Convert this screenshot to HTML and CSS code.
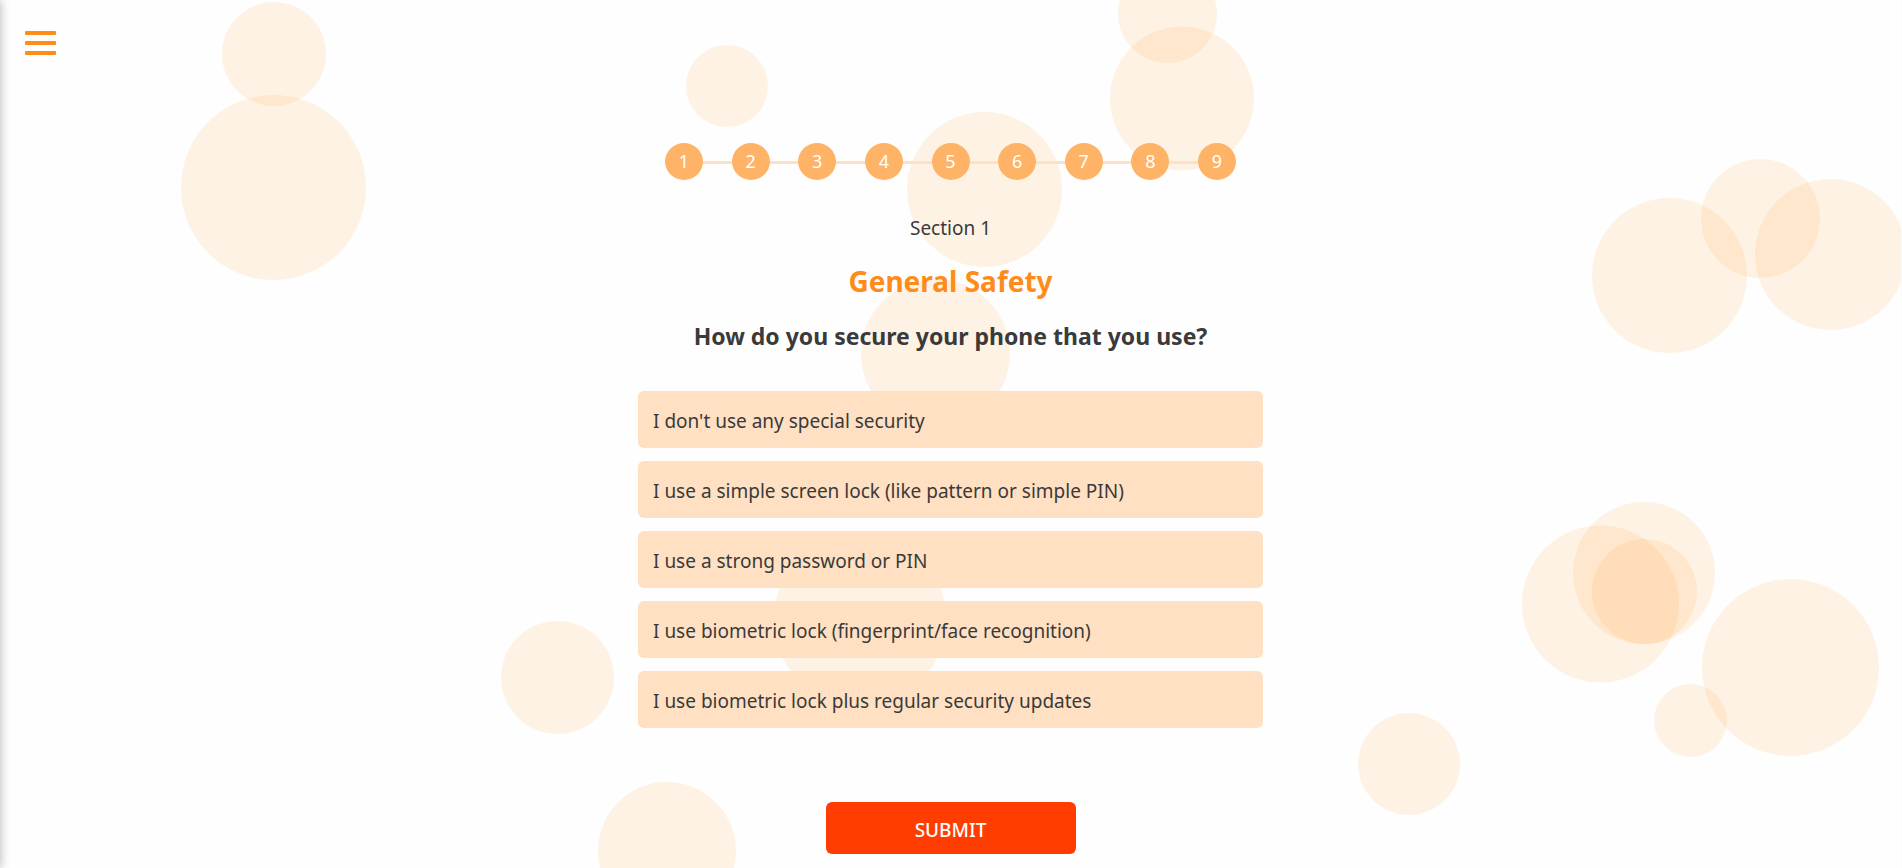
FILE: index.html
```html
<!DOCTYPE html>
<html lang="en">
<head>
<meta charset="utf-8">
<meta name="viewport" content="width=device-width, initial-scale=1">
<title>General Safety</title>
<link rel="stylesheet" href="styles.css">
</head>
<body>
<svg class="bubbles" aria-hidden="true">
  <circle cx="274" cy="54" r="52"/>
  <circle cx="273.5" cy="187.5" r="92.5"/>
  <circle cx="727" cy="86" r="41"/>
  <circle cx="1167.5" cy="13.5" r="49.5"/>
  <circle cx="1182" cy="98.5" r="72"/>
  <circle cx="984.5" cy="189.5" r="77.5"/>
  <circle cx="935.5" cy="353.5" r="74.5"/>
  <circle cx="860" cy="619.5" r="86.5"/>
  <circle cx="557.5" cy="677.5" r="56.5"/>
  <circle cx="667" cy="851" r="69"/>
  <circle cx="1669.5" cy="275.5" r="77.5"/>
  <circle cx="1760.5" cy="218.5" r="59.5"/>
  <circle cx="1830.5" cy="254.5" r="75.5"/>
  <circle cx="1600.5" cy="604" r="78.5"/>
  <circle cx="1644" cy="573" r="71"/>
  <circle cx="1644.5" cy="591.5" r="52.5"/>
  <circle cx="1790.5" cy="667.5" r="88.5"/>
  <circle cx="1690.5" cy="720.5" r="36.5"/>
  <circle cx="1409" cy="764" r="51"/>
</svg>
<aside class="sidebar"></aside>
<button class="menu-toggle" type="button" aria-label="Open menu">
  <span class="menu-bar"></span>
  <span class="menu-bar"></span>
  <span class="menu-bar"></span>
</button>
<main class="quiz">
  <ol class="steps">
    <li class="step">1</li>
    <li class="step">2</li>
    <li class="step">3</li>
    <li class="step">4</li>
    <li class="step">5</li>
    <li class="step">6</li>
    <li class="step">7</li>
    <li class="step">8</li>
    <li class="step">9</li>
  </ol>
  <p class="section-label">Section 1</p>
  <h1 class="section-title">General Safety</h1>
  <h2 class="question">How do you secure your phone that you use?</h2>
  <div class="options">
    <button class="option" type="button">I don't use any special security</button>
    <button class="option" type="button">I use a simple screen lock (like pattern or simple PIN)</button>
    <button class="option" type="button">I use a strong password or PIN</button>
    <button class="option" type="button">I use biometric lock (fingerprint/face recognition)</button>
    <button class="option" type="button">I use biometric lock plus regular security updates</button>
  </div>
  <button class="submit" type="submit">SUBMIT</button>
</main>
</body>
</html>
```
FILE: styles.css
```css
* {
  box-sizing: border-box;
}

body {
  margin: 0;
  min-height: 100vh;
  border-right: 1px solid #fbfbfb;
  background: #fefefe;
  color: #3a3a3a;
  font-family: "Segoe UI", "Noto Sans", sans-serif;
  font-size: 19px;
  line-height: 27px;
  overflow: hidden;
}

.bubbles {
  position: absolute;
  inset: 0;
  width: 100%;
  height: 100%;
  z-index: -1;
  fill: rgba(255, 150, 26, 0.115);
}

.sidebar {
  position: fixed;
  top: 0;
  bottom: 0;
  left: -300px;
  width: 300px;
  box-shadow: 0 0 10px rgba(0, 0, 0, 0.3);
}

.menu-toggle {
  position: fixed;
  top: 31px;
  left: 25px;
  display: flex;
  flex-direction: column;
  gap: 6px;
  padding: 0;
  border: 0;
  background: none;
  cursor: pointer;
}

.menu-bar {
  width: 31px;
  height: 4px;
  border-radius: 1px;
  background: #ff8c1a;
}

.quiz {
  display: flex;
  flex-direction: column;
  align-items: center;
  width: 100%;
  max-width: 625px;
  margin: 0 auto;
  padding-top: 143px;
}

.steps {
  position: relative;
  display: flex;
  justify-content: space-between;
  align-self: stretch;
  margin: 0 27px;
  padding: 0;
  list-style: none;
}

.steps::before {
  content: "";
  position: absolute;
  top: 18px;
  left: 0;
  right: 0;
  height: 3px;
  background: #ffe0c2;
}

.step {
  position: relative;
  display: flex;
  align-items: center;
  justify-content: center;
  width: 38px;
  height: 37px;
  border-radius: 50%;
  background: #ffb366;
  color: #fff;
  font-size: 18px;
}

.section-label {
  margin: 35px 0 0;
}

.section-title {
  margin: 19px 0 0;
  color: #ff8c1a;
  font-size: 28px;
  line-height: 40px;
}

.question {
  margin: 18px 0 0;
  font-size: 23px;
  line-height: 34px;
}

.options {
  display: flex;
  flex-direction: column;
  align-self: stretch;
  gap: 13px;
  margin-top: 38px;
}

.option {
  padding: 17px 15px 13px;
  border: 0;
  border-radius: 6px;
  background: #ffe0c2;
  color: inherit;
  font: inherit;
  text-align: left;
  cursor: pointer;
}

.submit {
  width: 250px;
  height: 52px;
  margin-top: 74px;
  padding: 4px 0 0;
  border: 0;
  border-radius: 6px;
  background: #ff3d00;
  color: #fff;
  font: inherit;
  font-weight: 500;
  cursor: pointer;
}
```
